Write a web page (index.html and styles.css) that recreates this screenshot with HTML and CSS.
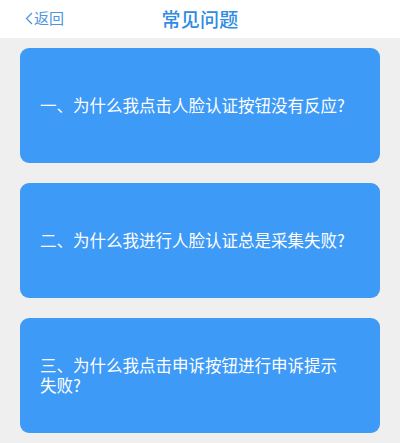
FILE: index.html
```html
<!DOCTYPE html>
<html lang="zh-CN">
<head>
<meta charset="utf-8">
<title>常见问题</title>
<link rel="stylesheet" href="styles.css">
</head>
<body>
<header class="nav">
  <a class="back">
    <svg class="chev" width="8" height="13" viewBox="0 0 8 13"><path d="M7 1 L1.5 6.5 L7 12" fill="none" stroke="#4d95e0" stroke-width="1.3"/></svg>
    <span>返回</span>
  </a>
  <h1 class="title">常见问题</h1>
</header>
<main class="list">
  <div class="card">一、为什么我点击人脸认证按钮没有反应?</div>
  <div class="card">二、为什么我进行人脸认证总是采集失败?</div>
  <div class="card">三、为什么我点击申诉按钮进行申诉提示失败?</div>
</main>
</body>
</html>
```
FILE: styles.css
```css
html, body {
  margin: 0;
  padding: 0;
}
body {
  background: #efefef;
  font-family: "Noto Sans CJK SC", "Noto Sans", sans-serif;
  width: 400px;
  height: 443px;
  overflow: hidden;
}
.nav {
  position: relative;
  height: 38px;
  background: #ffffff;
  display: flex;
  align-items: center;
  justify-content: center;
}
.back {
  position: absolute;
  left: 25px;
  top: 9px;
  display: flex;
  align-items: center;
  gap: 1px;
  color: #4d95e0;
  font-size: 15px;
  line-height: 18px;
}
.chev {
  display: block;
}
.title {
  margin: 0;
  font-size: 19px;
  font-weight: 500;
  color: #2f8be4;
  line-height: 24px;
  letter-spacing: 0.3px;
}
.list {
  display: flex;
  flex-direction: column;
  gap: 20px;
  padding: 10px 20px 0 20px;
}
.card {
  height: 115px;
  box-sizing: border-box;
  background: #3d9af7;
  border-radius: 9px;
  color: #ffffff;
  font-size: 16.5px;
  line-height: 19.5px;
  padding: 0 30px 0 20px;
  display: flex;
  align-items: center;
}
```
